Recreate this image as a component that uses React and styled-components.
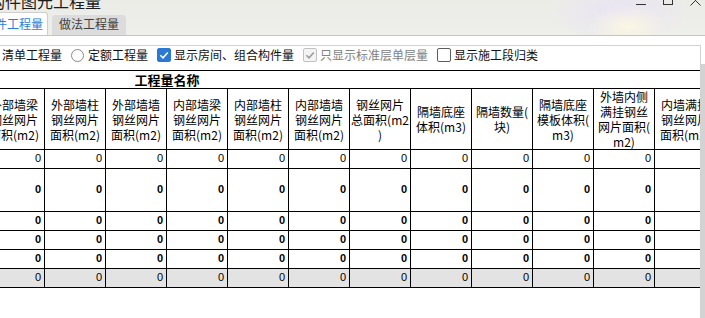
import React from 'react';
import styled, { createGlobalStyle } from 'styled-components';

const GlobalStyle = createGlobalStyle`
  html, body { margin: 0; padding: 0; background: #ffffff; }
  body {
    width: 705px;
    height: 318px;
    overflow: hidden;
    font-family: "Noto Sans CJK SC", "Noto Sans", sans-serif;
  }
`;

const Window = styled.div`
  width: 705px;
  height: 318px;
  overflow: hidden;
  display: flex;
  flex-direction: column;
  background: #ffffff;
`;

const Chrome = styled.div`
  height: 36px;
  flex: none;
  box-sizing: border-box;
  border-bottom: 1px solid #c4c4c4;
  display: flex;
  flex-direction: column;
  background:
    radial-gradient(ellipse 40px 22px at 628px 26px, rgba(252, 248, 226, 0.9), rgba(252, 248, 226, 0) 100%),
    radial-gradient(ellipse 70px 30px at 620px 12px, rgba(232, 226, 246, 0.9), rgba(232, 226, 246, 0) 100%),
    linear-gradient(180deg, #ecece7, #eeeeea);
`;

const TitleRow = styled.div`
  height: 12px;
  display: flex;
  justify-content: space-between;
  align-items: flex-end;
`;

const TitleText = styled.div`
  margin-left: -11px;
  padding-bottom: 3px;
  font-size: 16px;
  line-height: 16px;
  color: #1b1b1b;
  white-space: nowrap;
`;

const Controls = styled.div`
  align-self: flex-start;
  display: flex;
  gap: 17px;
  padding-right: 4px;
  svg { display: block; overflow: visible; }
`;

const TabStrip = styled.div`
  flex: 1;
  display: flex;
  align-items: flex-end;
  gap: 4px;
  margin-left: -22px;
`;

const Tab = styled.div`
  box-sizing: border-box;
  height: ${p => (p.$active ? 23 : 20)}px;
  padding: ${p => (p.$active ? '4px 4px 0' : '1px 6px 0')};
  border: ${p => (p.$active ? '1px solid #cfcfcf' : '1px solid #dcdcdc')};
  border-bottom: none;
  border-radius: 3px 3px 0 0;
  background: ${p => (p.$active ? '#ffffff' : '#dcdcdc')};
  color: ${p => (p.$active ? '#2a7fd6' : '#3e3e3e')};
  font-size: 12px;
  line-height: 14px;
  white-space: nowrap;
`;

const Body = styled.div`
  flex: 1;
  display: flex;
  padding-top: 9px;
  min-height: 0;
`;

const Frame = styled.div`
  width: 701px;
  flex: none;
  box-sizing: border-box;
  border-top: 1px solid #d2d2d2;
  border-right: 1px solid #d2d2d2;
  display: flex;
  flex-direction: column;
  overflow: hidden;
`;

const SideStrip = styled.div`
  flex: 1;
  display: flex;
  flex-direction: column;
`;

const ScrollBar = styled.div`
  margin-top: 19px;
  flex: 1;
  background: #d3d3d3;
`;

const OptionsRow = styled.div`
  height: 18px;
  flex: none;
  display: flex;
  align-items: center;
  gap: 9px;
  margin-left: -15px;
  font-size: 12px;
  white-space: nowrap;
`;

const Option = styled.label`
  display: flex;
  align-items: center;
  gap: ${p => p.$gap}px;
`;

const OptionText = styled.span`
  line-height: 14px;
  color: ${p => (p.$disabled ? '#828282' : '#111111')};
`;

const RadioCircle = styled.span`
  box-sizing: border-box;
  width: 13px;
  height: 13px;
  border-radius: 50%;
  border: 1px solid #8a8a8a;
  background: #ffffff;
  display: flex;
  align-items: center;
  justify-content: center;
  &::after {
    content: "";
    width: 5px;
    height: 5px;
    border-radius: 50%;
    background: ${p => (p.$checked ? '#333' : 'transparent')};
  }
`;

const CheckBox = styled.span`
  box-sizing: border-box;
  width: 14px;
  height: 14px;
  border-radius: 2px;
  border: 1px solid ${p => (p.$checked ? '#2b79d5' : p.$disabled ? '#c2c2c2' : '#5c5c5c')};
  background: ${p => (p.$checked ? '#2b79d5' : p.$disabled ? '#f4f4f4' : '#ffffff')};
  display: flex;
  align-items: center;
  justify-content: center;
  svg { display: block; }
`;

const TableViewport = styled.div`
  flex: 1;
  margin-top: 6px;
  overflow: hidden;
`;

const Grid = styled.div`
  display: grid;
  width: max-content;
  grid-template-columns: repeat(12, 61px);
  grid-template-rows: 18px 61px 19px 43px 19px 19px 19px 19px;
  margin-left: -16px;
  border-top: 1px solid #000000;
`;

const Cell = styled.div`
  box-sizing: border-box;
  border-bottom: 1px solid #000000;
  border-right: 1px solid #000000;
`;

const TitleCell = styled(Cell)`
  grid-column: span 6;
  border-right: none;
  display: flex;
  align-items: center;
  justify-content: center;
  font-size: 13px;
  line-height: 15px;
  font-weight: 700;
  color: #000000;
`;

const FillerCell = styled(Cell)`
  grid-column: span 6;
  border-right: none;
`;

const HeaderCell = styled(Cell)`
  display: flex;
  flex-direction: column;
  align-items: center;
  justify-content: center;
  font-size: 12px;
  line-height: 15px;
  color: #000000;
  white-space: nowrap;
`;

const DataCell = styled(Cell)`
  display: flex;
  align-items: center;
  justify-content: flex-end;
  padding: 0 3px 2px 0;
  background: ${p => (p.$shaded ? '#e3e3e3' : '#ffffff')};
  font-family: "Liberation Sans", Arial, sans-serif;
  font-size: 11px;
  font-weight: ${p => (p.$bold ? 700 : 400)};
  color: #000000;
`;

const headers = [
  ['外部墙梁', '钢丝网片', '面积(m2)'],
  ['外部墙柱', '钢丝网片', '面积(m2)'],
  ['外部墙墙', '钢丝网片', '面积(m2)'],
  ['内部墙梁', '钢丝网片', '面积(m2)'],
  ['内部墙柱', '钢丝网片', '面积(m2)'],
  ['内部墙墙', '钢丝网片', '面积(m2)'],
  ['钢丝网片', '总面积(m2', ')'],
  ['隔墙底座', '体积(m3)'],
  ['隔墙数量(', '块)'],
  ['隔墙底座', '模板体积(', 'm3)'],
  ['外墙内侧', '满挂钢丝', '网片面积(', 'm2)'],
  ['内墙满挂', '钢丝网片', '面积(m2)'],
];

const rows = [
  { bold: false, shaded: false },
  { bold: true, shaded: false },
  { bold: true, shaded: false },
  { bold: true, shaded: false },
  { bold: true, shaded: false },
  { bold: false, shaded: true },
];

const Check = ({ color }) => (
  <svg width="10" height="10" viewBox="0 0 10 10">
    <path d="M1.3 5.2 L4 7.8 L8.8 2.4" fill="none" stroke={color} strokeWidth="1.5" />
  </svg>
);

export default function App() {
  return (
    <>
      <GlobalStyle />
      <Window>
        <Chrome>
          <TitleRow>
            <TitleText>构件图元工程量</TitleText>
            <Controls>
              <svg width="10" height="12">
                <line x1="0" y1="4.5" x2="10" y2="4.5" stroke="#333" strokeWidth="1" />
              </svg>
              <svg width="10" height="12">
                <rect x="0.5" y="-5.5" width="9" height="10" fill="none" stroke="#333" strokeWidth="1" />
              </svg>
              <svg width="11" height="12">
                <path d="M0.5 -4.5 L10.5 5.5 M10.5 -4.5 L0.5 5.5" fill="none" stroke="#333" strokeWidth="1" />
              </svg>
            </Controls>
          </TitleRow>
          <TabStrip>
            <Tab $active>构件工程量</Tab>
            <Tab>做法工程量</Tab>
          </TabStrip>
        </Chrome>
        <Body>
          <Frame>
            <OptionsRow>
              <Option $gap={4}>
                <RadioCircle $checked />
                <OptionText>清单工程量</OptionText>
              </Option>
              <Option $gap={4}>
                <RadioCircle />
                <OptionText>定额工程量</OptionText>
              </Option>
              <Option $gap={3}>
                <CheckBox $checked><Check color="#ffffff" /></CheckBox>
                <OptionText>显示房间、组合构件量</OptionText>
              </Option>
              <Option $gap={3}>
                <CheckBox $disabled><Check color="#9a9a9a" /></CheckBox>
                <OptionText $disabled>只显示标准层单层量</OptionText>
              </Option>
              <Option $gap={3}>
                <CheckBox />
                <OptionText>显示施工段归类</OptionText>
              </Option>
            </OptionsRow>
            <TableViewport>
              <Grid>
                <TitleCell>工程量名称</TitleCell>
                <FillerCell />
                {headers.map((lines, i) => (
                  <HeaderCell key={`h${i}`}>
                    {lines.map((l, j) => (
                      <span key={j}>{l}</span>
                    ))}
                  </HeaderCell>
                ))}
                {rows.map((r, ri) =>
                  headers.map((_, ci) => (
                    <DataCell key={`d${ri}-${ci}`} $bold={r.bold} $shaded={r.shaded}>
                      {ci < 11 ? '0' : ''}
                    </DataCell>
                  ))
                )}
              </Grid>
            </TableViewport>
          </Frame>
          <SideStrip>
            <ScrollBar />
          </SideStrip>
        </Body>
      </Window>
    </>
  );
}
